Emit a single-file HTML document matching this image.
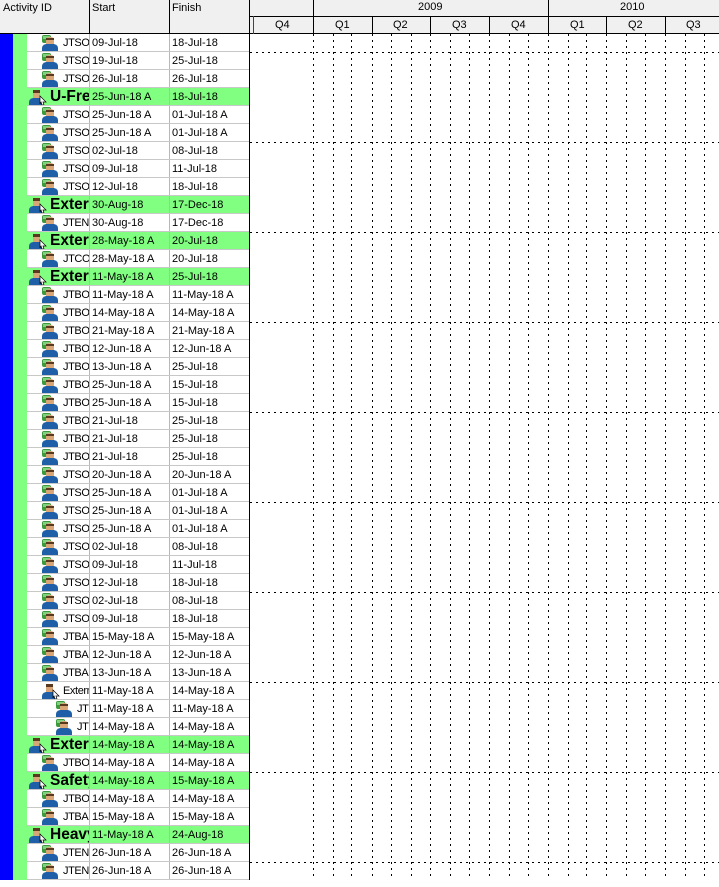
<!DOCTYPE html>
<html><head><meta charset="utf-8"><style>
*{margin:0;padding:0;box-sizing:border-box}
body{width:719px;height:887px;background:#fff;position:relative;overflow:hidden;font-family:"Liberation Sans",Arial,sans-serif;font-size:11px;color:#000}
.hd{position:absolute;top:0;left:0;width:719px;height:34px;background:#f0f0f0;border-bottom:1px solid #000}
.ht{position:absolute;font-size:11px}
.vl{position:absolute;background:#000;width:1px}
.hl{position:absolute;background:#000;height:1px}
.blue{position:absolute;left:0;top:34px;width:13px;height:846px;background:#0000ff}
.grn{position:absolute;left:13px;top:34px;width:14px;height:846px;background:#80ff80}
.rows{position:absolute;left:27px;top:34px;width:222px}
.r{height:18px;position:relative;border-bottom:1px solid #c8c8c8;white-space:nowrap}
.r.g{background:#80ff80}
.r>div{position:absolute;top:0;height:17px;line-height:19px;overflow:hidden}
.i{left:0;width:62px}
.s{left:62px;width:80px;border-left:1px solid #b8b8b8;padding-left:2px}
.f{left:142px;width:80px;border-left:1px solid #b8b8b8;padding-left:2px}
.i svg{position:absolute;top:0}
.i span{position:absolute;left:36px;letter-spacing:-0.4px}
.g .i span{left:23px;font-weight:bold;font-size:15.5px;line-height:18px;letter-spacing:0}
.sg .i span{left:36px}
.d .i span{left:50px}
</style></head><body>
<div class="hd"></div>
<div class="ht" style="left:3px;top:2px">Activity ID</div>
<div class="ht" style="left:92px;top:2px">Start</div>
<div class="ht" style="left:172px;top:2px">Finish</div>
<div class="vl" style="left:89px;top:0;height:34px"></div>
<div class="vl" style="left:169px;top:0;height:34px"></div>
<div class="vl" style="left:249px;top:0;height:880px"></div>
<div class="hl" style="left:249px;top:16px;width:470px"></div>
<div class="vl" style="left:313px;top:0;height:34px"></div>
<div class="vl" style="left:548px;top:0;height:34px"></div>
<div class="vl" style="left:253px;top:16px;height:18px;background:#444"></div>
<div class="vl" style="left:372px;top:16px;height:18px"></div>
<div class="vl" style="left:430px;top:16px;height:18px"></div>
<div class="vl" style="left:489px;top:16px;height:18px"></div>
<div class="vl" style="left:606px;top:16px;height:18px"></div>
<div class="vl" style="left:665px;top:16px;height:18px"></div>
<div class="ht" style="left:418px;top:1px">2009</div>
<div class="ht" style="left:620px;top:1px">2010</div>
<div class="ht" style="left:275px;top:19px">Q4</div>
<div class="ht" style="left:335px;top:19px">Q1</div>
<div class="ht" style="left:393px;top:19px">Q2</div>
<div class="ht" style="left:452px;top:19px">Q3</div>
<div class="ht" style="left:511px;top:19px">Q4</div>
<div class="ht" style="left:570px;top:19px">Q1</div>
<div class="ht" style="left:628px;top:19px">Q2</div>
<div class="ht" style="left:686px;top:19px">Q3</div>
<svg style="position:absolute;left:0;top:0" width="719" height="887">
<defs>
<g id="p"><rect x="1" y="1" width="9" height="8" rx="2" fill="#3c9a3c"/><rect x="2" y="2" width="7" height="3" fill="#7fd07f"/><rect x="5" y="3" width="8" height="9" rx="3" fill="#d9a777"/><path d="M5 4h8v2h-8z" fill="#5a3a1e"/><path d="M1 17v-3q0-3 4-4h8q4 1 4 4v3z" fill="#1f5fa8"/></g>
<g id="q"><path d="M5 2h7v9h-7z" fill="#d9a777"/><path d="M5 2h7v3h-7z" fill="#5a3a1e"/><path d="M1 17v-3q0-3 4-4h7q3 1 3 4v3z" fill="#1f5fa8"/><path d="M12 8l6 6-3 0 1 3-2 0-1-3-1 2z" fill="#fff" stroke="#000" stroke-width="0.7"/></g>
</defs>
<g stroke="#000" stroke-dasharray="2 4" stroke-width="1">
<path d="M313.5 34V880M333.5 34V880M351.5 34V880M372.5 34V880M391.5 34V880M411.5 34V880M430.5 34V880M450.5 34V880M469.5 34V880M489.5 34V880M509.5 34V880M528.5 34V880M548.5 34V880M568.5 34V880M586.5 34V880M606.5 34V880M626.5 34V880M645.5 34V880M665.5 34V880M685.5 34V880M704.5 34V880"/>
<path d="M250 52.5H719M250 142.5H719M250 232.5H719M250 322.5H719M250 412.5H719M250 502.5H719M250 592.5H719M250 682.5H719M250 772.5H719M250 862.5H719"/>
</g>
</svg>
<div class="blue"></div><div class="grn"></div>
<div class="rows">
<div class="r"><div class="i"><svg style="left:14px" width="18" height="18"><use href="#p"/></svg><span>JTSO</span></div><div class="s">09-Jul-18</div><div class="f">18-Jul-18</div></div>
<div class="r"><div class="i"><svg style="left:14px" width="18" height="18"><use href="#p"/></svg><span>JTSO</span></div><div class="s">19-Jul-18</div><div class="f">25-Jul-18</div></div>
<div class="r"><div class="i"><svg style="left:14px" width="18" height="18"><use href="#p"/></svg><span>JTSO</span></div><div class="s">26-Jul-18</div><div class="f">26-Jul-18</div></div>
<div class="r g"><div class="i"><svg style="left:1px" width="20" height="18"><use href="#q"/></svg><span>U-Freight</span></div><div class="s">25-Jun-18 A</div><div class="f">18-Jul-18</div></div>
<div class="r"><div class="i"><svg style="left:14px" width="18" height="18"><use href="#p"/></svg><span>JTSO</span></div><div class="s">25-Jun-18 A</div><div class="f">01-Jul-18 A</div></div>
<div class="r"><div class="i"><svg style="left:14px" width="18" height="18"><use href="#p"/></svg><span>JTSO</span></div><div class="s">25-Jun-18 A</div><div class="f">01-Jul-18 A</div></div>
<div class="r"><div class="i"><svg style="left:14px" width="18" height="18"><use href="#p"/></svg><span>JTSO</span></div><div class="s">02-Jul-18</div><div class="f">08-Jul-18</div></div>
<div class="r"><div class="i"><svg style="left:14px" width="18" height="18"><use href="#p"/></svg><span>JTSO</span></div><div class="s">09-Jul-18</div><div class="f">11-Jul-18</div></div>
<div class="r"><div class="i"><svg style="left:14px" width="18" height="18"><use href="#p"/></svg><span>JTSO</span></div><div class="s">12-Jul-18</div><div class="f">18-Jul-18</div></div>
<div class="r g"><div class="i"><svg style="left:1px" width="20" height="18"><use href="#q"/></svg><span>External</span></div><div class="s">30-Aug-18</div><div class="f">17-Dec-18</div></div>
<div class="r"><div class="i"><svg style="left:14px" width="18" height="18"><use href="#p"/></svg><span>JTENG</span></div><div class="s">30-Aug-18</div><div class="f">17-Dec-18</div></div>
<div class="r g"><div class="i"><svg style="left:1px" width="20" height="18"><use href="#q"/></svg><span>External</span></div><div class="s">28-May-18 A</div><div class="f">20-Jul-18</div></div>
<div class="r"><div class="i"><svg style="left:14px" width="18" height="18"><use href="#p"/></svg><span>JTCO</span></div><div class="s">28-May-18 A</div><div class="f">20-Jul-18</div></div>
<div class="r g"><div class="i"><svg style="left:1px" width="20" height="18"><use href="#q"/></svg><span>External</span></div><div class="s">11-May-18 A</div><div class="f">25-Jul-18</div></div>
<div class="r"><div class="i"><svg style="left:14px" width="18" height="18"><use href="#p"/></svg><span>JTBO</span></div><div class="s">11-May-18 A</div><div class="f">11-May-18 A</div></div>
<div class="r"><div class="i"><svg style="left:14px" width="18" height="18"><use href="#p"/></svg><span>JTBO</span></div><div class="s">14-May-18 A</div><div class="f">14-May-18 A</div></div>
<div class="r"><div class="i"><svg style="left:14px" width="18" height="18"><use href="#p"/></svg><span>JTBO</span></div><div class="s">21-May-18 A</div><div class="f">21-May-18 A</div></div>
<div class="r"><div class="i"><svg style="left:14px" width="18" height="18"><use href="#p"/></svg><span>JTBO</span></div><div class="s">12-Jun-18 A</div><div class="f">12-Jun-18 A</div></div>
<div class="r"><div class="i"><svg style="left:14px" width="18" height="18"><use href="#p"/></svg><span>JTBO</span></div><div class="s">13-Jun-18 A</div><div class="f">25-Jul-18</div></div>
<div class="r"><div class="i"><svg style="left:14px" width="18" height="18"><use href="#p"/></svg><span>JTBO</span></div><div class="s">25-Jun-18 A</div><div class="f">15-Jul-18</div></div>
<div class="r"><div class="i"><svg style="left:14px" width="18" height="18"><use href="#p"/></svg><span>JTBO</span></div><div class="s">25-Jun-18 A</div><div class="f">15-Jul-18</div></div>
<div class="r"><div class="i"><svg style="left:14px" width="18" height="18"><use href="#p"/></svg><span>JTBO</span></div><div class="s">21-Jul-18</div><div class="f">25-Jul-18</div></div>
<div class="r"><div class="i"><svg style="left:14px" width="18" height="18"><use href="#p"/></svg><span>JTBO</span></div><div class="s">21-Jul-18</div><div class="f">25-Jul-18</div></div>
<div class="r"><div class="i"><svg style="left:14px" width="18" height="18"><use href="#p"/></svg><span>JTBO</span></div><div class="s">21-Jul-18</div><div class="f">25-Jul-18</div></div>
<div class="r"><div class="i"><svg style="left:14px" width="18" height="18"><use href="#p"/></svg><span>JTSO</span></div><div class="s">20-Jun-18 A</div><div class="f">20-Jun-18 A</div></div>
<div class="r"><div class="i"><svg style="left:14px" width="18" height="18"><use href="#p"/></svg><span>JTSO</span></div><div class="s">25-Jun-18 A</div><div class="f">01-Jul-18 A</div></div>
<div class="r"><div class="i"><svg style="left:14px" width="18" height="18"><use href="#p"/></svg><span>JTSO</span></div><div class="s">25-Jun-18 A</div><div class="f">01-Jul-18 A</div></div>
<div class="r"><div class="i"><svg style="left:14px" width="18" height="18"><use href="#p"/></svg><span>JTSO</span></div><div class="s">25-Jun-18 A</div><div class="f">01-Jul-18 A</div></div>
<div class="r"><div class="i"><svg style="left:14px" width="18" height="18"><use href="#p"/></svg><span>JTSO</span></div><div class="s">02-Jul-18</div><div class="f">08-Jul-18</div></div>
<div class="r"><div class="i"><svg style="left:14px" width="18" height="18"><use href="#p"/></svg><span>JTSO</span></div><div class="s">09-Jul-18</div><div class="f">11-Jul-18</div></div>
<div class="r"><div class="i"><svg style="left:14px" width="18" height="18"><use href="#p"/></svg><span>JTSO</span></div><div class="s">12-Jul-18</div><div class="f">18-Jul-18</div></div>
<div class="r"><div class="i"><svg style="left:14px" width="18" height="18"><use href="#p"/></svg><span>JTSO</span></div><div class="s">02-Jul-18</div><div class="f">08-Jul-18</div></div>
<div class="r"><div class="i"><svg style="left:14px" width="18" height="18"><use href="#p"/></svg><span>JTSO</span></div><div class="s">09-Jul-18</div><div class="f">18-Jul-18</div></div>
<div class="r"><div class="i"><svg style="left:14px" width="18" height="18"><use href="#p"/></svg><span>JTBA</span></div><div class="s">15-May-18 A</div><div class="f">15-May-18 A</div></div>
<div class="r"><div class="i"><svg style="left:14px" width="18" height="18"><use href="#p"/></svg><span>JTBA</span></div><div class="s">12-Jun-18 A</div><div class="f">12-Jun-18 A</div></div>
<div class="r"><div class="i"><svg style="left:14px" width="18" height="18"><use href="#p"/></svg><span>JTBA</span></div><div class="s">13-Jun-18 A</div><div class="f">13-Jun-18 A</div></div>
<div class="r sg"><div class="i"><svg style="left:14px" width="20" height="18"><use href="#q"/></svg><span>External</span></div><div class="s">11-May-18 A</div><div class="f">14-May-18 A</div></div>
<div class="r d"><div class="i"><svg style="left:28px" width="18" height="18"><use href="#p"/></svg><span>JTBO</span></div><div class="s">11-May-18 A</div><div class="f">11-May-18 A</div></div>
<div class="r d"><div class="i"><svg style="left:28px" width="18" height="18"><use href="#p"/></svg><span>JTBO</span></div><div class="s">14-May-18 A</div><div class="f">14-May-18 A</div></div>
<div class="r g"><div class="i"><svg style="left:1px" width="20" height="18"><use href="#q"/></svg><span>External</span></div><div class="s">14-May-18 A</div><div class="f">14-May-18 A</div></div>
<div class="r"><div class="i"><svg style="left:14px" width="18" height="18"><use href="#p"/></svg><span>JTBO</span></div><div class="s">14-May-18 A</div><div class="f">14-May-18 A</div></div>
<div class="r g"><div class="i"><svg style="left:1px" width="20" height="18"><use href="#q"/></svg><span>Safety</span></div><div class="s">14-May-18 A</div><div class="f">15-May-18 A</div></div>
<div class="r"><div class="i"><svg style="left:14px" width="18" height="18"><use href="#p"/></svg><span>JTBO</span></div><div class="s">14-May-18 A</div><div class="f">14-May-18 A</div></div>
<div class="r"><div class="i"><svg style="left:14px" width="18" height="18"><use href="#p"/></svg><span>JTBA</span></div><div class="s">15-May-18 A</div><div class="f">15-May-18 A</div></div>
<div class="r g"><div class="i"><svg style="left:1px" width="20" height="18"><use href="#q"/></svg><span>Heavy</span></div><div class="s">11-May-18 A</div><div class="f">24-Aug-18</div></div>
<div class="r"><div class="i"><svg style="left:14px" width="18" height="18"><use href="#p"/></svg><span>JTENG</span></div><div class="s">26-Jun-18 A</div><div class="f">26-Jun-18 A</div></div>
<div class="r"><div class="i"><svg style="left:14px" width="18" height="18"><use href="#p"/></svg><span>JTENG</span></div><div class="s">26-Jun-18 A</div><div class="f">26-Jun-18 A</div></div>
</div>
</body></html>
